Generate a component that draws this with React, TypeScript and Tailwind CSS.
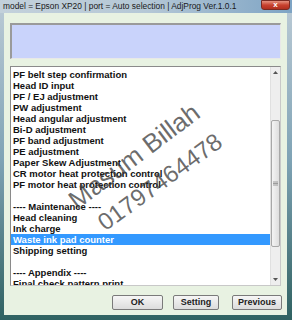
const items: string[] = [
  'PF belt step confirmation',
  'Head ID input',
  'PF / EJ adjustment',
  'PW adjustment',
  'Head angular adjustment',
  'Bi-D adjustment',
  'PF band adjustment',
  'PE adjustment',
  'Paper Skew Adjustment',
  'CR motor heat protection control',
  'PF motor heat protection control',
  '',
  '---- Maintenance ----',
  'Head cleaning',
  'Ink charge',
  'Waste ink pad counter',
  'Shipping setting',
  '',
  '---- Appendix ----',
  'Final check pattern print',
];

const SELECTED = 'Waste ink pad counter';

function WinButton({ label, width }: { label: string; width: string }) {
  return (
    <button
      className={`${width} h-[15px] rounded-[2px] border border-[#7a7a7a] bg-gradient-to-b from-[#f6f6f6] to-[#dcdcdc] text-[9px] font-bold text-[#222] leading-none`}
    >
      {label}
    </button>
  );
}

export default function App() {
  return (
    <div
      className="relative w-[292px] h-[320px] overflow-hidden bg-gradient-to-b from-[#bccbd6] via-[#7fa3b5] to-[#2f6262]"
      style={{ fontFamily: '"Liberation Sans", Arial, sans-serif' }}
    >
      {/* Title bar */}
      <div className="h-[13px] flex items-start justify-between bg-gradient-to-r from-[#c3d1db] via-[#b5c8d6] to-[#7ea4c4]">
        <span className="pl-[3px] pt-[2px] text-[8.4px] leading-[9px] text-[#1a1a1a] whitespace-nowrap">
          model = Epson XP20 | port = Auto selection | AdjProg Ver.1.0.1
        </span>
        <div className="mr-[2px] w-[29px] h-[10px] rounded-b-[3px] border border-[#7a2a22] bg-gradient-to-b from-[#e4907f] via-[#c8412f] to-[#b12f1f] flex items-center justify-center">
          <span className="text-[8px] font-bold leading-none text-white">x</span>
        </div>
      </div>

      {/* Client area */}
      <div className="ml-[4px] mr-[5px] h-[302px] bg-[#e8f2e2] px-[6px] pt-[10px] flex flex-col">
        {/* Info box */}
        <div className="h-[36px] border-t-2 border-l-2 border-b border-r border-t-[#9a9a9a] border-l-[#9a9a9a] border-b-[#e8e8e8] border-r-[#e8e8e8] bg-[#c9d3fb]" />

        {/* List */}
        <div className="mt-[7px] h-[220px] border border-t-[#8a8a8a] border-l-[#8a8a8a] border-b-[#c8c8c8] border-r-[#c8c8c8] bg-white flex overflow-hidden">
          <div className="flex-1 pt-[1.5px] overflow-hidden">
            {items.map((item, i) => (
              <div
                key={i}
                className={`h-[11px] pl-[2px] text-[9.5px] leading-[11px] font-bold whitespace-nowrap ${
                  item === SELECTED ? 'bg-[#3399ff] text-white' : 'text-[#111]'
                }`}
              >
                {item}
              </div>
            ))}
          </div>
          {/* Scrollbar */}
          <div className="w-[10px] bg-[#eeeeee] border-l border-[#e0e0e0] flex flex-col items-center">
            <div className="h-[11px] flex items-center justify-center">
              <svg width="5" height="3" viewBox="0 0 5 3"><path d="M0 3 L2.5 0 L5 3 Z" fill="#555" /></svg>
            </div>
            <div className="mt-[42px] w-[9px] h-[127px] rounded-[2px] border border-[#a8a8a8] bg-gradient-to-r from-[#f4f4f4] to-[#dedede] flex items-center justify-center">
              <svg width="5" height="5" viewBox="0 0 5 5">
                <path d="M0 1 H5 M0 2.5 H5 M0 4 H5" stroke="#888" strokeWidth="0.8" />
              </svg>
            </div>
            <div className="mt-auto h-[12px] flex items-center justify-center">
              <svg width="5" height="3" viewBox="0 0 5 3"><path d="M0 0 L2.5 3 L5 0 Z" fill="#555" /></svg>
            </div>
          </div>
        </div>

        {/* Buttons */}
        <div className="mt-[9px] flex justify-end -mr-[1px]">
          <WinButton label="OK" width="w-[51px]" />
          <div className="w-[10px]" />
          <WinButton label="Setting" width="w-[46px]" />
          <div className="w-[13px]" />
          <WinButton label="Previous" width="w-[50px]" />
        </div>
      </div>

      {/* Watermark */}
      <div className="pointer-events-none absolute left-[134px] top-[156px] -translate-x-1/2 -translate-y-1/2 -rotate-[37deg] whitespace-nowrap text-[26px] leading-none text-[#3c3c3c]/75">
        Masum Billah
      </div>
      <div className="pointer-events-none absolute left-[160px] top-[182px] -translate-x-1/2 -translate-y-1/2 -rotate-[36deg] whitespace-nowrap text-[24px] leading-none text-[#3c3c3c]/75">
        01797464478
      </div>
    </div>
  );
}
